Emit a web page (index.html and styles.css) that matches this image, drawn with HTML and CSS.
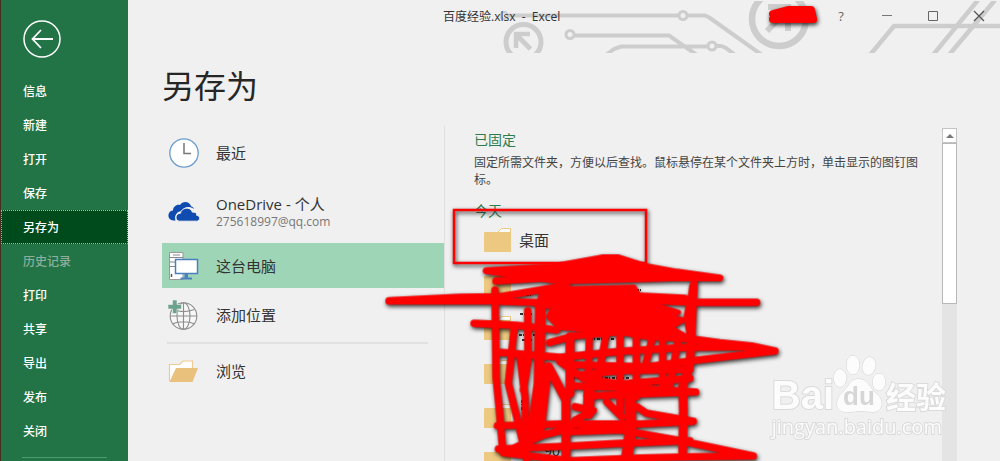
FILE: index.html
```html
<!DOCTYPE html>
<html lang="zh-CN">
<head>
<meta charset="utf-8">
<title>百度经验.xlsx - Excel</title>
<link rel="stylesheet" href="styles.css">
</head>
<body>
<div class="app">
  <nav class="sidebar">
    <button class="back" aria-label="返回">
      <svg width="38" height="38" viewBox="0 0 38 38" fill="none" stroke="#fff"><circle cx="19" cy="19" r="18" stroke-width="1.5"/><path d="M30 19H9.500M18 10L9.500 19L18 28" stroke-width="1.800"/></svg>
    </button>
    <ul class="menu">
      <li><a href="#">信息</a></li>
      <li><a href="#">新建</a></li>
      <li><a href="#">打开</a></li>
      <li><a href="#">保存</a></li>
      <li><a href="#" class="active">另存为</a></li>
      <li><a href="#" class="disabled">历史记录</a></li>
      <li><a href="#">打印</a></li>
      <li><a href="#">共享</a></li>
      <li><a href="#">导出</a></li>
      <li><a href="#">发布</a></li>
      <li><a href="#">关闭</a></li>
    </ul>
    <hr class="menu-line">
  </nav>

  <main class="main">
    <svg class="circuit" width="500" height="54" viewBox="500 0 500 54" fill="none" stroke="#cdcdcd" stroke-width="4">
      <clipPath id="band"><rect x="500" y="1" width="500" height="52"/></clipPath>
      <g clip-path="url(#band)">
        <circle cx="504" cy="15.500" r="3.500" stroke-width="2.500"/>
        <path d="M508 15.500H679M688 15.500H705L710 18L762 55"/>
        <circle cx="683" cy="15.500" r="4" stroke-width="3"/>
        <circle cx="523.500" cy="42" r="17.500" stroke-width="5"/>
        <path d="M530.500 49L517 35.500" stroke-width="5"/>
        <path d="M516 48V34H530" stroke-width="4.500"/>
        <circle cx="570" cy="34.500" r="4" stroke-width="3"/>
        <path d="M575 35.500H669L697 55M606 55L614 49L621 46.500H707M716 46H721L726 48L735 55"/>
        <circle cx="712" cy="46" r="4" stroke-width="3"/>
        <circle cx="779" cy="19" r="27" stroke-width="6.500"/>
        <path d="M767 31L786 11M768 7H788V31" stroke-width="6"/>
        <path d="M870 55L894 26H1000M933 55L978 0M949 55L995 0" stroke-width="4.500"/>
      </g>
    </svg>

    <header class="titlebar">
      <span class="doc">百度经验.xlsx &nbsp;- &nbsp;Excel</span>
      <button class="win help" aria-label="帮助">?</button>
      <button class="win" aria-label="最小化"><svg width="12" height="12" viewBox="0 0 12 12"><path d="M1 5.500H11" stroke="#777"/></svg></button>
      <button class="win" aria-label="最大化"><svg width="12" height="12" viewBox="0 0 12 12"><path d="M1.500 1.500H10.500V10.500H1.500Z" fill="none" stroke="#666"/></svg></button>
      <button class="win" aria-label="关闭"><svg width="12" height="12" viewBox="0 0 12 12"><path d="M1 1L11 11M11 1L1 11" stroke="#555" stroke-width="1.300"/></svg></button>
    </header>

    <h1 class="heading">另存为</h1>

    <div class="columns">
      <section class="places">
        <button class="place">
          <svg width="32" height="32" viewBox="0 0 32 32"><circle cx="16" cy="16" r="14.200" fill="#fff" stroke="#6b9ccc" stroke-width="1.300"/><path d="M16 6V16.500H23" fill="none" stroke="#777" stroke-width="1.500"/></svg>
          <span>最近</span>
        </button>
        <button class="place account">
          <svg width="32" height="32" viewBox="0 0 32 32" fill="#0f4bb0"><path d="M5.500 24.500C1.500 24 0 21.500.5 18.500C1 15.800 3 14.500 5 14.500C5 10.500 9 7.800 12 9C14.500 5 21 4.500 23.300 10.500C24.500 10.600 25.500 11.500 26 13C20 9 15 12 14 15C9.500 15 6 19 7.500 24.500Z"/><path d="M11.500 25.200C6.800 25.200 6.500 17.500 12.500 17.200C13 12 22 9.500 24.500 16.200C28 15.800 28.800 17.500 28.500 19.200C32.800 19.500 32.500 25.200 28.500 25.200Z" stroke="#f0f0f0" stroke-width="1"/></svg>
          <span>OneDrive - 个人<small>275618997@qq.com</small></span>
        </button>
        <button class="place selected">
          <svg width="32" height="32" viewBox="0 0 32 32"><path d="M1.500 2.500H15V29.500H1.500Z" fill="#fff" stroke="#999"/><path d="M1.500 7.500H15M1.500 12H15M1.500 16.500H8M5 5H12" stroke="#888"/><path d="M3.500 24V27" stroke="#555" stroke-width="1.500"/><path d="M7.500 9.500H29.500V23.500H7.500Z" fill="#fff" stroke="#4a80c0" stroke-width="1.500"/><path d="M16.500 24H20V27.500H24V29.500H12.500V27.500H16.500Z" fill="#4a80c0"/></svg>
          <span>这台电脑</span>
        </button>
        <button class="place">
          <svg width="32" height="32" viewBox="0 0 32 32"><g fill="none" stroke="#8d8d8d" stroke-width="1.100"><circle cx="15.500" cy="17" r="13.300" fill="#f7f7f7"/><ellipse cx="15.500" cy="17" rx="6.500" ry="13.300"/><path d="M15.500 4V30.500M2.500 17H29M4.500 10.500C11 13 20 13 26.500 10.500M5 25C10 22 21 22 26 25"/></g><path d="M0 5.500H4.500V1H9V5.500H13.500V10H9V14.500H4.500V10H0Z" fill="#6ba38d" stroke="#f0f0f0" stroke-width=".6"/></svg>
          <span>添加位置</span>
        </button>
        <hr class="places-line">
        <button class="place">
          <svg width="32" height="32" viewBox="0 0 32 32"><path d="M1.500 26V9.500H11.500L15 6H24.500V13" fill="#fff" stroke="#edcb92" stroke-width="1.200"/><path d="M8 13H30L24.500 27H1.500Z" fill="#e9c07c"/></svg>
          <span>浏览</span>
        </button>
      </section>

      <section class="folders">
        <div class="list">
          <h2>已固定</h2>
          <p>固定所需文件夹，方便以后查找。鼠标悬停在某个文件夹上方时，单击显示的图钉图标。</p>
          <h2>今天</h2>
          <svg class="defs" width="0" height="0"><symbol id="folder" viewBox="0 0 27 25"><path d="M13.500 5.500L17.500 1.500H26.500V6" fill="#fff" stroke="#edc880"/><path d="M1 5H27V25H1Q0 25 0 24V6Q0 5 1 5Z" fill="#edc880"/><path d="M15 5L18 2.500H26V5Z" fill="#fff"/></symbol></svg>
          <ul>
            <li><svg class="folder"><use href="#folder"/></svg><a href="#">桌面</a></li>
            <li><svg class="folder"><use href="#folder"/></svg></li>
            <li><svg class="folder"><use href="#folder"/></svg></li>
            <li><svg class="folder"><use href="#folder"/></svg></li>
            <li><svg class="folder"><use href="#folder"/></svg></li>
            <li><svg class="folder"><use href="#folder"/></svg></li>
          </ul>
        </div>
        <div class="scroll">
          <button class="scroll-up" aria-label="向上滚动"></button>
          <div class="thumb"></div>
        </div>
      </section>
    </div>

    <svg class="marks" width="872" height="461" viewBox="128 0 872 461" fill="none" stroke="#f00" stroke-linecap="round" stroke-linejoin="round">
      <g stroke="#333" stroke-width="2" stroke-dasharray="3 1 1 2" stroke-linecap="butt">
        <path d="M520 274H545M519 295H533M520 314H533M519 335H535M522 340H532M590 339H615M570 378H630M645 384H662M575 428H615M522 400V410M636 290H642"/>
      </g>
      <text x="544" y="456" class="covered">90</text>
      <g class="ink">
        <rect x="454" y="210" width="192" height="53" stroke-width="2.500" stroke-linejoin="miter"/>
        <path d="M773 14L788 10H811L813 19H773L790 15H808" stroke-width="8"/>
        <g transform="translate(460 250) scale(.3333)" stroke-width="22">
          <path d="M78 62L280 50L430 23H475L560 50L650 66L780 84H640L300 93Z" fill="#f00" stroke-width="20"/>
          <path d="M108 93L320 80"/>
          <path d="M-213 152L0 142L120 140L320 106M-213 153H90L250 158M540 150L700 157H890"/>
          <path d="M245 130L265 118L522 112L535 135L675 142L560 158L655 187L600 195L670 210L630 232L695 270L560 262L470 245L300 232L266 200L280 170L235 165Z" fill="#f00" stroke-width="16"/>
          <path d="M42 220L170 226L290 240M268 278L340 258L480 245M120 307L300 322L480 304L680 292L875 290M690 266L780 278L875 288L945 303L690 333L560 350L330 344"/>
          <path d="M360 375L480 362L690 358M300 335L370 385L480 402L690 385M340 408L480 412L707 426L540 432L380 438"/>
          <path d="M345 470L400 482L345 510M440 455L485 500M530 470L560 490L700 514L540 522L300 522L112 527M330 545L480 540L650 570L880 618L700 620L540 624L330 632L130 608L250 555L330 535M690 572L480 580L330 588L115 597"/>
          <path d="M105 120L108 380L118 480L128 600L150 610M162 240L145 400L175 520L200 628M180 320L195 440L198 600M203 182L204 330L190 420M265 350L242 550"/>
          <path d="M241 160L237 400L215 560" stroke-width="32"/>
          <path d="M265 350L318 450V620M330 260V430" stroke-width="27"/>
          <path d="M388 255L385 390M437 260L415 380M480 230V480M529 230V440M583 240L555 350M608 200V410M655 270L628 410"/>
          <path d="M388 420L385 490M510 440L512 540L500 625" stroke-width="34"/>
          <path d="M702 100L682 200L692 260"/>
          <path d="M700 110L690 340L668 410L670 480L668 605" stroke-width="26"/>
        </g>
      </g>
    </svg>
  </main>

  <aside class="watermark" aria-label="百度经验">
    <div class="brand">
      <span class="bai">Bai</span>
      <span class="paw">
        <svg width="54" height="60" viewBox="0 0 54 60" fill="#fcfcfc" stroke="#d2d2d2"><ellipse cx="8" cy="24" rx="6.500" ry="9"/><ellipse cx="21" cy="11" rx="6.500" ry="9.500"/><ellipse cx="37" cy="12" rx="6.500" ry="9" transform="rotate(12 37 12)"/><ellipse cx="47" cy="28" rx="6.500" ry="8.500"/><path d="M27 25C36 25 37 34 45 40C53 47 50 58 41 58C35 58 32 57 27 57C22 57 18 59 13 58C3 57 3 46 10 39C17 33 18 25 27 25Z"/></svg>
        <b>du</b>
      </span>
      <span class="jy">经验</span>
    </div>
    <div class="site">jingyan.baidu.com</div>
  </aside>
</div>
</body>
</html>
```
FILE: styles.css
```css
* { box-sizing: border-box; }

body {
  margin: 0;
  background: #f0f0f0;
  color: #333;
  font-family: "Open Sans", "Noto Sans CJK SC", sans-serif;
  font-size: 12px;
}

button {
  padding: 0;
  border: 0;
  background: none;
  color: inherit;
  font: inherit;
}

a { color: inherit; text-decoration: none; }
ul { margin: 0; padding: 0; list-style: none; }
h1, h2, p { margin: 0; font-weight: 400; }

.app {
  position: relative;
  display: flex;
  height: 100vh;
  overflow: hidden;
}

/* Sidebar */
.sidebar {
  flex: none;
  width: 128px;
  padding-top: 20px;
  border-left: 1px solid #45301f;
  background: #227447;
  color: #fff;
  overflow: hidden;
}

.back { display: block; margin: 0 0 16px 22px; }
.back svg { display: block; }

.menu a {
  display: block;
  height: 34px;
  padding-left: 21px;
  border: 1px solid transparent;
  line-height: 34px;
  font-weight: 500;
}

.menu .active {
  border: 1px dotted #a5b8a8;
  background: #004b1c;
}

.menu .disabled { color: #8fae9b; }

.menu-line {
  width: 85px;
  height: 1px;
  margin: 9px 0 0 21px;
  border: 0;
  background: #4e9a6f;
}

/* Main area */
.main {
  position: relative;
  display: flex;
  flex: 1;
  flex-direction: column;
  min-width: 0;
  padding-left: 34px;
}

.circuit { position: absolute; top: 0; right: 0; }

.titlebar {
  position: relative;
  display: flex;
  flex: none;
  align-items: center;
  gap: 4px;
  height: 32px;
}

.doc { flex: 1; padding-left: 281px; }
.win { display: grid; place-items: center; width: 42px; height: 32px; }
.help { color: #666; font-size: 13px; }

.heading {
  height: 94px;
  color: #262626;
  font-size: 32px;
  line-height: 108px;
}

.columns { display: flex; flex: 1; min-height: 0; }

/* Save locations */
.places {
  flex: none;
  width: 283px;
  border-right: 1px solid #e0e0e0;
}

.place {
  display: flex;
  align-items: center;
  gap: 16px;
  width: 100%;
  height: 54px;
  padding-left: 6px;
  font-size: 15px;
  line-height: 20px;
  text-align: left;
}

.place.account { height: 63px; }
.place.selected { height: 45px; background: #9fd5b7; }
.place small { display: block; color: #777; font-size: 12px; line-height: 16px; }

.places-line {
  height: 2px;
  margin: 0 16px 0 5px;
  border: 0;
  background: #e1e1e1;
}

/* Folder list */
.folders {
  display: flex;
  flex: 1;
  gap: 17px;
  padding: 2px 43px 0 29px;
}

.list { flex: 1; min-width: 0; overflow: hidden; }
.list h2 { color: #2c7c4d; font-size: 14px; line-height: 24px; }
.list p { margin: 2px 0 11px; line-height: 17px; color: #444; }
.defs { display: block; }

.list li {
  display: flex;
  align-items: center;
  gap: 8px;
  height: 44px;
  padding-left: 10px;
  font-size: 15px;
}

.list ul { margin-top: -6px; }
.folder { width: 27px; height: 25px; }

.scroll { flex: none; width: 15px; background: #e4e4e4; }

.scroll-up {
  display: grid;
  place-items: center;
  width: 15px;
  height: 15px;
  border: 1px solid #c4c4c4;
  background: #fff;
}

.scroll-up::before {
  content: "";
  border: 4px solid transparent;
  border-top: 0;
  border-bottom: 4px solid #777;
}

.thumb { height: 161px; border: 1px solid #b8b8b8; background: #fff; }

/* Pen marks over the page */
.marks { position: absolute; top: 0; left: 0; pointer-events: none; }
.ink { filter: drop-shadow(1px 2px 2px rgba(0, 0, 0, .8)); }
.covered { fill: #222; stroke: none; font-size: 14px; }

/* Watermark */
.watermark {
  position: absolute;
  right: 54px;
  bottom: 21px;
  color: #fcfcfc;
  -webkit-text-stroke: 2px #dadada;
  paint-order: stroke fill;
}

.brand { display: flex; align-items: flex-end; height: 60px; }
.bai { font: 700 40px/38px "Liberation Sans", sans-serif; }
.paw { position: relative; height: 60px; margin-left: -2px; }

.paw b {
  position: absolute;
  right: 0;
  bottom: 4px;
  left: 0;
  color: #d6d6d6;
  font: 700 26px/28px "Liberation Sans", sans-serif;
  text-align: center;
  -webkit-text-stroke: 0;
}

.jy { font-size: 30px; font-weight: 700; line-height: 34px; }
.site { font-size: 20px; line-height: 26px; }
```
